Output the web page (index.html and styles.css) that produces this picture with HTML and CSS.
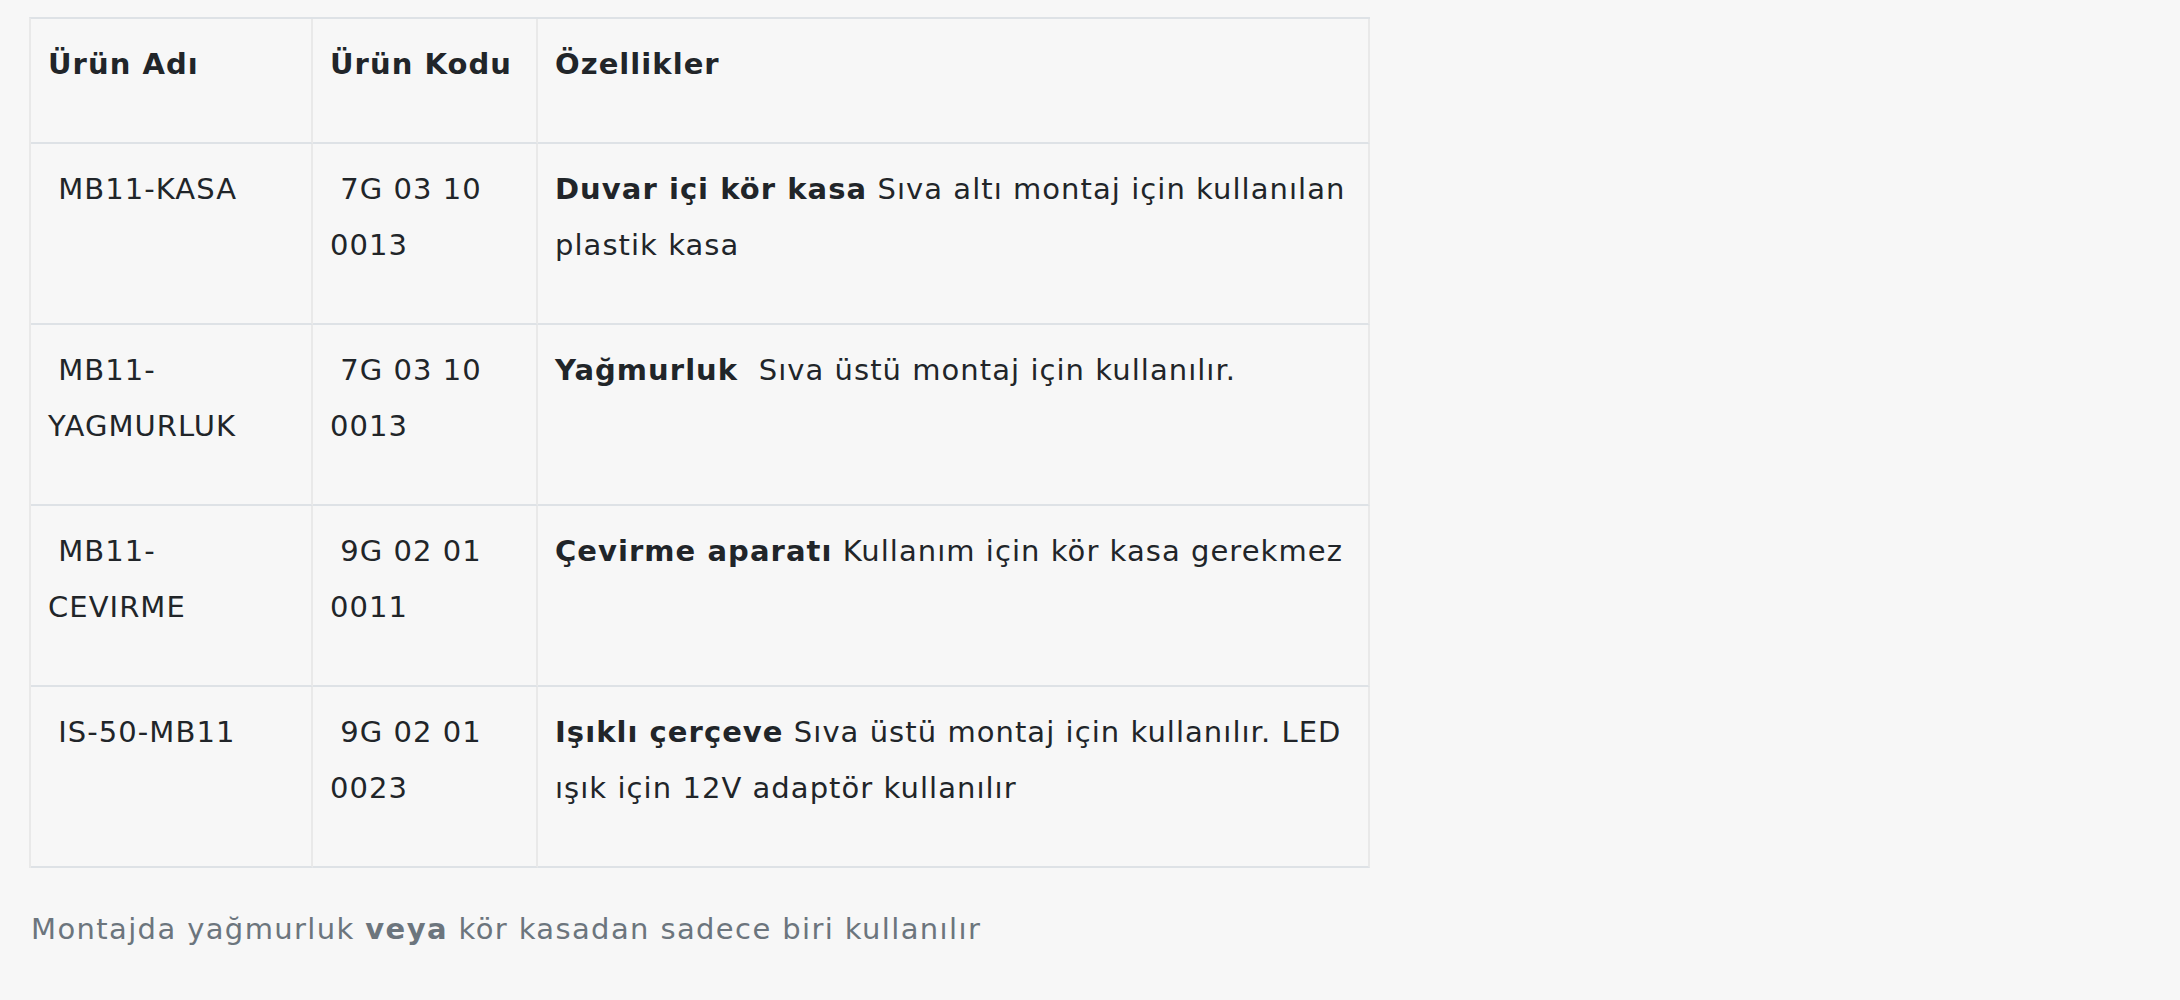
FILE: index.html
```html
<!DOCTYPE html>
<html lang="tr">
<head>
    <meta charset="UTF-8">
    <meta name="viewport" content="width=device-width, initial-scale=1.0">
    <title>MB11 Aksesuarlar</title>
    <link rel="stylesheet" href="styles.css">
</head>
<body>
    <div class="content">
        <table class="product-table">
            <colgroup>
                <col class="col-name">
                <col class="col-code">
                <col class="col-desc">
            </colgroup>
            <thead>
                <tr>
                    <th>Ürün Adı</th>
                    <th>Ürün Kodu</th>
                    <th>Özellikler</th>
                </tr>
            </thead>
            <tbody>
                <tr>
                    <td>&nbsp;MB11-KASA</td>
                    <td>&nbsp;7G 03 10 0013</td>
                    <td><strong>Duvar içi kör kasa</strong> Sıva altı montaj için kullanılan plastik kasa</td>
                </tr>
                <tr>
                    <td>&nbsp;MB11-YAGMURLUK</td>
                    <td>&nbsp;7G 03 10 0013</td>
                    <td><strong>Yağmurluk</strong>&nbsp; Sıva üstü montaj için kullanılır.</td>
                </tr>
                <tr>
                    <td>&nbsp;MB11-CEVIRME</td>
                    <td>&nbsp;9G 02 01 0011</td>
                    <td><strong>Çevirme aparatı</strong> Kullanım için kör kasa gerekmez</td>
                </tr>
                <tr>
                    <td>&nbsp;IS-50-MB11</td>
                    <td>&nbsp;9G 02 01 0023</td>
                    <td><strong>Işıklı çerçeve</strong> Sıva üstü montaj için kullanılır. LED ışık için 12V adaptör kullanılır</td>
                </tr>
            </tbody>
        </table>
        <p class="note">Montajda yağmurluk <strong>veya</strong> kör kasadan sadece biri kullanılır</p>
    </div>
</body>
</html>
```

FILE: styles.css
```css
body {
    margin: 0;
    background-color: #f7f7f7;
    color: #212529;
    font-family: "DejaVu Sans", sans-serif;
    font-size: 29px;
    letter-spacing: 1.05px;
    line-height: 56.5px;
}
.content {
    padding: 17px 0 0 29px;
}
.product-table {
    border-collapse: separate;
    border-spacing: 0;
    table-layout: fixed;
    width: 1341px;
    border-top: 2px solid #dee2e6;
    border-left: 2px solid #e9e9e9;
}
.col-name {
    width: 282px;
}
.col-code {
    width: 225px;
}
.col-desc {
    width: 832px;
}
.product-table th,
.product-table td {
    text-align: left;
    vertical-align: top;
    padding: 17px 18px 49px 17px;
    border-bottom: 2px solid #dee2e6;
    border-right: 2px solid #e9e9e9;
}
.product-table th,
.product-table strong {
    font-weight: bold;
}
.note {
    margin: 33px 0 0;
    padding-left: 2px;
    color: #6c757d;
    font-size: 29px;
    letter-spacing: 1.38px;
    line-height: 56px;
}
```
